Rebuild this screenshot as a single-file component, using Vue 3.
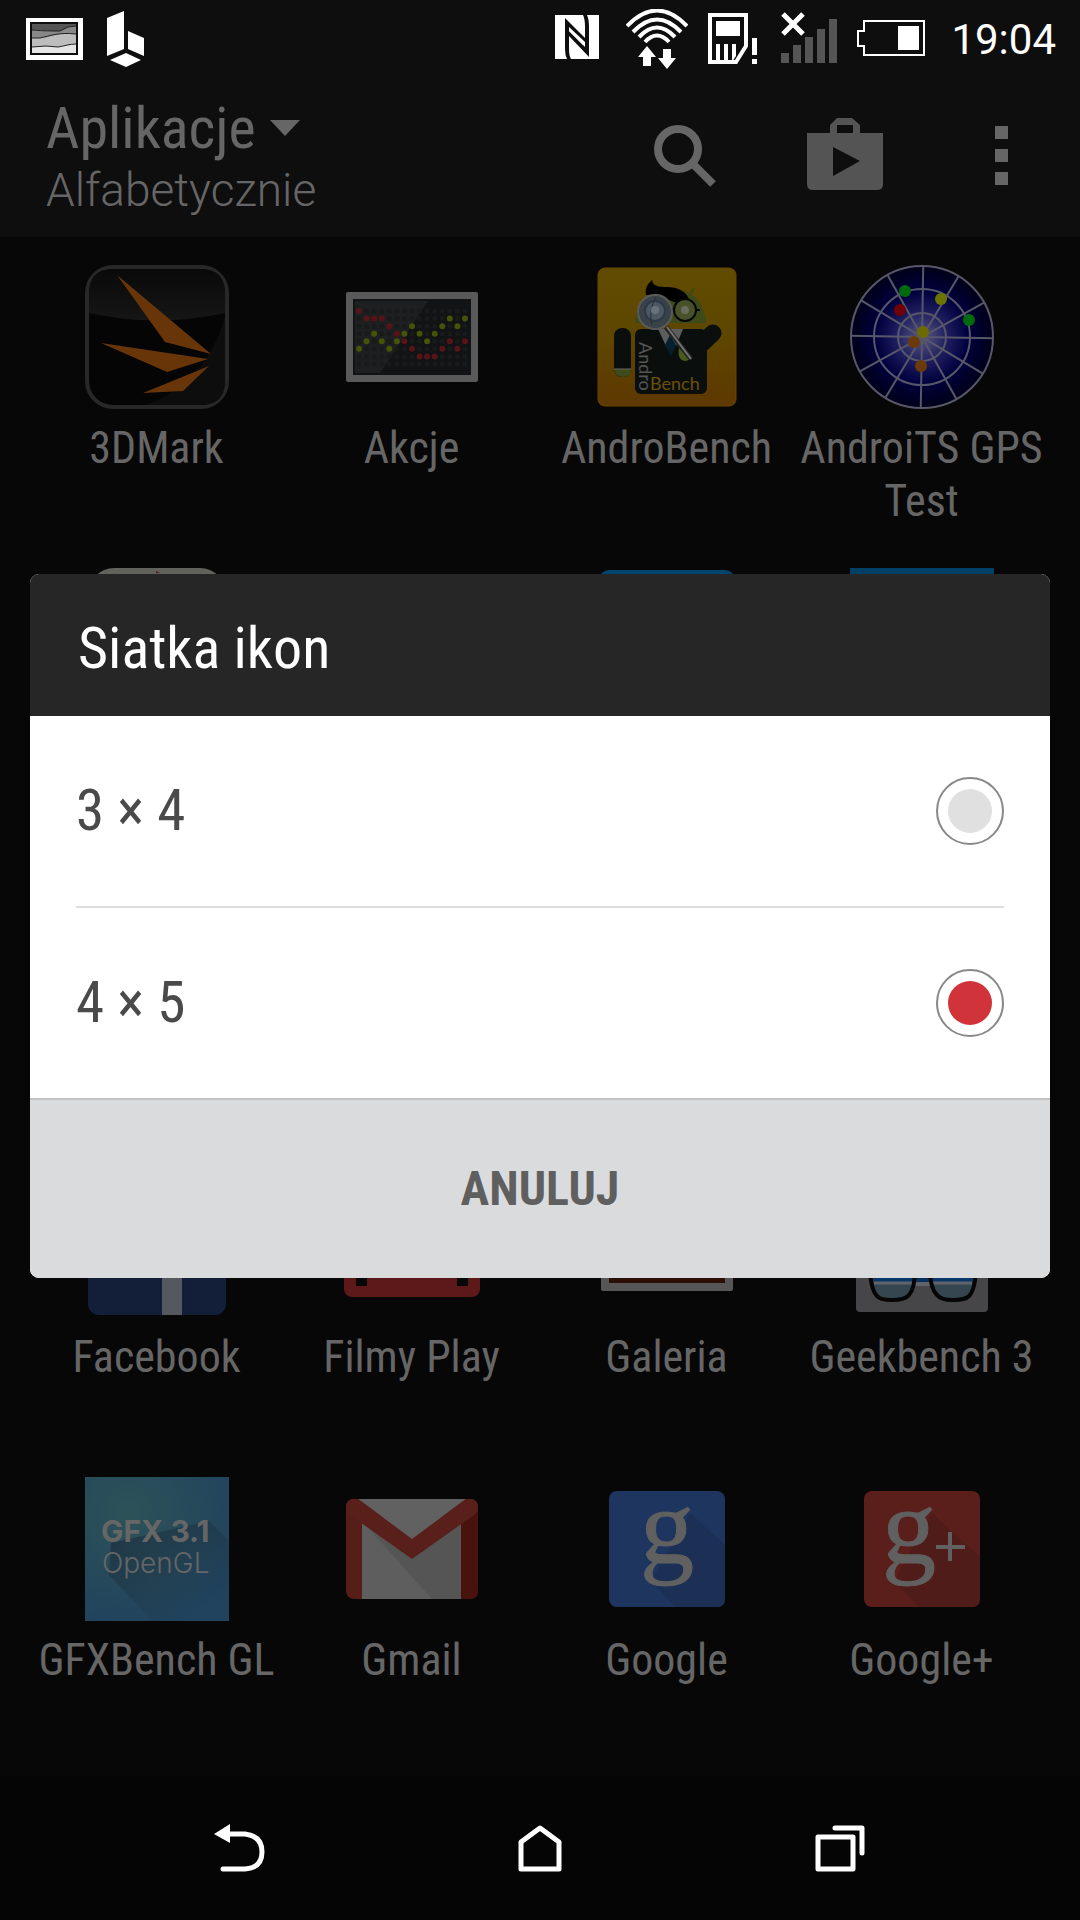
<template>
  <div class="screen">
    <header class="status-bar">
      <svg class="status-icon" width="61" height="42" viewBox="0 0 61 42">
        <rect width="57" height="42" fill="#fff" />
        <rect x="4" y="4" width="48" height="33" fill="#0e0e0e" />
        <rect x="6" y="6" width="44" height="29" fill="#bdbdbd" />
        <path d="M6 6h44v3l-9 1-6 3-12 0-17-1z" fill="#555" />
        <path d="M6 12c12 1 20 1 28 1l8-4 8-1v8c-9-2-17 0-25 2-7 2-11 2-19 2z" fill="#888" />
        <path d="M6 29l14-1 12 1c7-1 11-3 18-3v9H6z" fill="#e6e6e6" />
        <path
          d="M6 12c12 1 20 1 28 1l8-4 8-1M6 20h8c10-2 18-6 36-4M6 29l14-1 12 1c7-1 11-3 18-3"
          fill="none"
          stroke="#222"
        />
      </svg>
      <svg class="status-icon" width="37" height="56" viewBox="0 0 37 56">
        <path d="M0 7L17 0v38L0 45zM21 20l16 7v18l-16-7zM19 42l15 7-15 7-16-7z" fill="#fff" />
      </svg>
      <span class="spacer"></span>
      <svg class="status-icon" width="51" height="48" viewBox="0 0 51 48">
        <rect width="44" height="44" fill="#fff" />
        <path
          d="M12 44q-2-4-2-10V3l20 20V12q0-8-2-12h4q2 4 2 12v30L14 21v12q0 8 2 11zM14 12v4l16 16v-5z"
          fill="#0e0e0e"
        />
        <path d="M14 13v3l14 14v-4z" fill="#fff" />
      </svg>
      <svg class="status-icon" width="62" height="60" viewBox="0 0 62 60">
        <g fill="none" stroke="#fff" stroke-width="4">
          <path d="M1 17q30-31 60 0M7 23q24-25 48 0M13 28q18-19 36 0M19 33q12-13 24 0" />
        </g>
        <path
          d="M21 37l9 11h-5v9h-8v-9h-5zM41 60l9-11h-5v-9h-8v9h-5z"
          fill="#fff"
        />
      </svg>
      <svg class="status-icon" width="53" height="52" viewBox="0 0 53 52">
        <path d="M2 2h36v31L28 49H2z" fill="none" stroke="#fff" stroke-width="4" />
        <path
          d="M8 8h24v15H8zM8 31h4v18H8zM16 31h4v18h-4zM24 31h4v12l-4 6zM44 25h5v17h-5zM44 46h5v5h-5z"
          fill="#fff"
        />
      </svg>
      <svg class="status-icon" width="56" height="54" viewBox="0 0 56 54">
        <path
          d="M0 41h8v10H0zM12 33h8v18h-8zM24 25h8v26h-8zM36 17h8v34h-8zM48 7h8v44h-8z"
          fill="#555"
        />
        <path d="M2 2l20 20M22 2L2 22" stroke="#fff" stroke-width="5" />
      </svg>
      <svg class="status-icon" width="74" height="38" viewBox="0 0 74 38">
        <path d="M7 1h60v34H7V26H1V11h6z" fill="none" stroke="#fff" stroke-width="2" />
        <rect x="41" y="6" width="21" height="24" fill="#fff" />
      </svg>
      <time class="clock">19:04</time>
    </header>

    <div class="app-bar">
      <div class="app-bar-text">
        <button type="button" class="view-picker">
          Aplikacje
          <svg width="30" height="16" viewBox="0 0 30 16"><path d="M0 0h30L15 16z" fill="#666" /></svg>
        </button>
        <p class="sort-order">Alfabetycznie</p>
      </div>
      <button type="button" class="action" aria-label="Szukaj">
        <svg width="68" height="62" viewBox="0 0 68 62">
          <circle cx="24" cy="24" r="20" fill="none" stroke="#666" stroke-width="8" />
          <path d="M39 39l20 20" stroke="#666" stroke-width="8" />
        </svg>
      </button>
      <button type="button" class="action" aria-label="Sklep Play">
        <svg width="76" height="77" viewBox="0 0 76 77">
          <path
            fill-rule="evenodd"
            d="M0 15h23V7l7-7h15l8 7v8h23v51q0 6-6 6H6q-6 0-6-6zM30 7v8h16V7zM26 29v29l27-15z"
            fill="#545454"
          />
        </svg>
      </button>
      <button type="button" class="action" aria-label="Menu">
        <svg width="13" height="60" viewBox="0 0 13 60">
          <path d="M0 0h13v13H0zM0 23h13v13H0zM0 46h13v13H0z" fill="#666" />
        </svg>
      </button>
    </div>

    <main class="app-grid">
      <button v-for="(app, index) in apps" :key="index" type="button" class="app">
        <svg v-if="app.icon === '3dmark'" class="app-icon" viewBox="0 0 144 144">
          <rect x="2" y="2" width="140" height="140" rx="26" fill="#050505" stroke="#282828" stroke-width="4" />
          <path d="M4 48V28Q4 4 28 4h88q24 0 24 24v20q-68 15-136 0z" fill="url(#gloss)" />
          <path d="M140 52v64q0 24-24 24H60q60-20 80-88z" fill="#0d0d0d" />
          <path d="M32 10l94 79-46-12zM16 78l107 16-41 13zM124 101l-26 25-40 2z" fill="#683509" />
        </svg>

        <svg v-else-if="app.icon === 'stocks'" class="app-icon" viewBox="0 0 144 144">
          <rect x="6" y="27" width="132" height="90" rx="2" fill="#595959" />
          <rect x="13" y="34" width="118" height="76" fill="#111315" />
          <path d="M15 36h73l-48 72H15z" fill="#1d1f20" />
          <g v-for="row in 8" :key="row">
            <circle
              v-for="col in 15"
              :key="col"
              :cx="19 + (col - 1) * 7.57"
              :cy="46 + (row - 1) * 7.57"
              r="2.5"
              fill="#171b1a"
            />
          </g>
          <circle
            v-for="(level, col) in redLine"
            :key="'r' + col"
            :cx="19 + col * 7.57"
            :cy="46 + level * 7.57"
            r="3"
            fill="#571417"
          />
          <circle
            v-for="(level, col) in greenLine"
            :key="'g' + col"
            :cx="19 + col * 7.57"
            :cy="46 + level * 7.57"
            r="3"
            fill="#465207"
          />
        </svg>

        <svg v-else-if="app.icon === 'androbench'" class="app-icon" viewBox="0 0 144 144">
          <rect x="3" y="3" width="138" height="138" rx="7" fill="url(#amber)" stroke="#6b4700" />
          <path d="M40 58q2-34 35-34t36 34z" fill="#3d4a19" />
          <path d="M94 32l5-9" stroke="#3d4a19" stroke-width="2" />
          <path d="M57 15q-8 7-6 15l6 0q10-3 17 5l8 3q8-5 12-4-6-13-25-12-12 0-12-7z" fill="#000" />
          <rect x="19" y="63" width="17" height="49" rx="8" fill="#0a0f0e" />
          <path d="M19 104h17q0 8-8 8t-9-8z" fill="#3d4a19" />
          <path d="M19 104h17" stroke="#666" />
          <rect x="40" y="64" width="72" height="65" rx="6" fill="#0a0f0e" />
          <path d="M97 88l21-20" stroke="#0a0f0e" stroke-width="17" stroke-linecap="round" />
          <path d="M63 64h25l-7 17-6-10-4 10z" fill="#5d5d5d" />
          <path d="M75 70l6 10-5 11-6-11z" fill="#07202f" />
          <path d="M84 83q-2 13 7 13l5-2z" fill="#4a5a1b" />
          <circle cx="90" cy="45" r="11" fill="#49512a" stroke="#070707" stroke-width="2" />
          <circle cx="90" cy="45" r="4" fill="#6a6c5c" />
          <path d="M76 44h4M101 45h4" stroke="#070707" stroke-width="2" />
          <circle cx="60" cy="47" r="17" fill="#394249" stroke="#5a5a58" stroke-width="2" />
          <circle cx="60" cy="46" r="10" fill="#4c5863" stroke="#2e3948" stroke-width="2" />
          <path d="M61 32q-8 15-4 28" fill="none" stroke="#28302d" />
          <circle cx="60" cy="45" r="4" fill="#68727c" />
          <path d="M71 62l25 32" stroke="#242424" stroke-width="5" />
          <path d="M72 62l24 32" stroke="#747474" stroke-width="2" />
          <text class="badge-text" x="0" y="0" fill="#555" transform="translate(44 77) rotate(90)">Andro</text>
          <text class="badge-text" x="55" y="125" fill="#6d4f08">Bench</text>
        </svg>

        <svg v-else-if="app.icon === 'gps'" class="app-icon" viewBox="0 0 144 144">
          <circle cx="72" cy="72" r="71" fill="url(#radar)" />
          <g fill="none" stroke="#57576a" stroke-width="2">
            <path
              v-for="n in 6"
              :key="n"
              d="M72 1v142"
              :transform="`rotate(${n * 30 + 1} 72 72)`"
            />
            <circle cx="72" cy="72" r="24" />
            <circle cx="72" cy="72" r="48" />
            <circle cx="72" cy="72" r="71" />
          </g>
          <circle
            v-for="(dot, n) in satellites"
            :key="'s' + n"
            :cx="dot.x"
            :cy="dot.y"
            r="6"
            :fill="dot.color"
          />
        </svg>

        <svg v-else-if="app.icon === 'dial'" class="app-icon" viewBox="0 0 144 144">
          <rect x="3" width="138" height="144" rx="26" fill="#62625d" />
          <path d="M71 3l4 2h-4z" fill="#5a1414" />
        </svg>
        <svg v-else-if="app.icon === 'tile'" class="app-icon" viewBox="0 0 144 144">
          <rect x="4" y="2" width="136" height="138" rx="10" fill="#00466c" />
        </svg>
        <svg v-else-if="app.icon === 'square'" class="app-icon" viewBox="0 0 144 144">
          <rect width="144" height="144" fill="#003f66" />
        </svg>

        <svg v-else-if="app.icon === 'facebook'" class="app-icon" viewBox="0 0 144 144">
          <rect x="3" y="3" width="138" height="138" rx="11" fill="#131e38" />
          <rect x="77" y="60" width="20" height="81" fill="#55585f" />
        </svg>

        <svg v-else-if="app.icon === 'movies'" class="app-icon" viewBox="0 0 144 144">
          <rect x="4" y="20" width="136" height="103" rx="8" fill="#5d1819" />
          <path d="M16 96h11v16H16zM117 96h11v16h-11z" fill="#070707" />
        </svg>

        <svg v-else-if="app.icon === 'gallery'" class="app-icon" viewBox="0 0 144 144">
          <rect x="6" y="26" width="132" height="91" rx="2" fill="#565656" />
          <rect x="14" y="34" width="116" height="75" fill="#2c0e04" />
        </svg>

        <svg v-else-if="app.icon === 'geekbench'" class="app-icon" viewBox="0 0 144 144">
          <rect x="6" y="6" width="132" height="132" rx="4" fill="#464548" />
          <path d="M22 80h100v28H22z" fill="#08305f" />
          <path d="M22 108h100v4H22z" fill="#60646a" />
          <path
            d="M20 96q1 20 7 26 3 4 15 4 13 0 17-5 6-7 6-25zM80 96q0 18 7 25 4 5 16 5t16-4q6-6 7-26z"
            fill="#354650"
          />
          <path d="M22 96q0 7 2 12h40l1-12zM80 96l1 12h42l2-12z" fill="#08386b" />
          <path d="M24 109h38M82 109h40" stroke="#60646a" stroke-width="3" />
          <path
            d="M20 96q1 20 7 26 3 4 15 4 13 0 17-5 6-7 6-25zM80 96q0 18 7 25 4 5 16 5t16-4q6-6 7-26z"
            fill="none"
            stroke="#050505"
            stroke-width="4"
          />
        </svg>

        <svg v-else-if="app.icon === 'gfxbench'" class="app-icon" viewBox="0 0 144 144">
          <rect width="144" height="144" fill="url(#teal)" />
          <path d="M24 98l44 46h76V64l-20-20-98 22z" fill="url(#longShadow)" />
          <text class="gfx-bold" x="16" y="65">GFX 3.1</text>
          <text class="gfx-light" x="17" y="96">OpenGL</text>
        </svg>

        <svg v-else-if="app.icon === 'gmail'" class="app-icon" viewBox="0 0 144 144">
          <rect x="6" y="22" width="132" height="100" rx="8" fill="#571d19" />
          <path d="M22 40h99v82H22z" fill="#5e5e5e" />
          <path d="M24 46l68 76h29V47z" fill="#555" />
          <path d="M18 22h108L72 62z" fill="#616161" />
          <path d="M121 47l17-13v80q0 8-8 8h-9z" fill="#48130c" />
          <path d="M6 30q0-8 8-8h4l54 40 54-40h4q8 0 8 8 0 5-4 8L72 82 10 38q-4-3-4-8z" fill="#591f1b" />
        </svg>

        <svg v-else-if="app.icon === 'google'" class="app-icon" viewBox="0 0 144 144">
          <rect x="14" y="14" width="116" height="116" rx="8" fill="#1d355f" />
          <path d="M95 36l35 32v54q0 8-8 8H80L56 104z" fill="#1b3054" />
          <text class="serif-g" x="45" y="86">g</text>
        </svg>

        <svg v-else-if="app.icon === 'gplus'" class="app-icon" viewBox="0 0 144 144">
          <rect x="14" y="14" width="116" height="116" rx="8" fill="#5a1f1b" />
          <path d="M82 36l48 44v42q0 8-8 8H68L44 104z" fill="#501c19" />
          <text class="serif-g" x="32" y="86">g</text>
          <path d="M86 70h29M100 55v29" stroke="#606060" stroke-width="4" />
        </svg>

        <span v-else class="app-icon"></span>
        <span class="app-label">{{ app.label }}</span>
      </button>
    </main>

    <nav class="nav-bar">
      <button type="button" class="nav-button" aria-label="Wstecz">
        <svg width="52" height="48" viewBox="0 0 52 48">
          <path d="M0 10L16 0v19z" fill="#fff" />
          <path d="M14 10h17q17 2 17 18T31 45H9" fill="none" stroke="#fff" stroke-width="5" stroke-linecap="round" />
        </svg>
      </button>
      <button type="button" class="nav-button" aria-label="Ekran główny">
        <svg width="44" height="48" viewBox="0 0 44 48">
          <path d="M3 18L22 4l19 14v27H3z" fill="none" stroke="#fff" stroke-width="5" stroke-linejoin="round" />
        </svg>
      </button>
      <button type="button" class="nav-button" aria-label="Ostatnie aplikacje">
        <svg width="50" height="48" viewBox="0 0 50 48">
          <g fill="none" stroke="#fff" stroke-width="5" stroke-linejoin="round" stroke-linecap="round">
            <path d="M3 13h35v32H3zM20 4h27v25" />
          </g>
        </svg>
      </button>
    </nav>

    <div class="dialog-layer">
      <form class="dialog" role="dialog" aria-labelledby="dialog-title" @submit.prevent>
        <h2 id="dialog-title" class="dialog-title">Siatka ikon</h2>
        <div class="options">
          <label v-for="size in gridSizes" :key="size" class="option">
            <span>{{ size }}</span>
            <input v-model="selected" type="radio" name="grid" class="radio" :value="size" />
          </label>
        </div>
        <button type="button" class="cancel">ANULUJ</button>
      </form>
    </div>

    <svg class="defs" width="0" height="0" aria-hidden="true">
      <defs>
        <linearGradient id="gloss" x1="0" y1="0" x2="0" y2="1">
          <stop offset="0" stop-color="#090909" />
          <stop offset="1" stop-color="#161616" />
        </linearGradient>
        <linearGradient id="amber" x1="0" y1="0" x2="0" y2="1">
          <stop offset="0" stop-color="#604c00" />
          <stop offset="0.5" stop-color="#5e4600" />
          <stop offset="1" stop-color="#5e3800" />
        </linearGradient>
        <radialGradient id="radar">
          <stop offset="0" stop-color="#5a5a80" />
          <stop offset="0.35" stop-color="#1f1f60" />
          <stop offset="0.65" stop-color="#00003e" />
          <stop offset="1" stop-color="#000018" />
        </radialGradient>
        <radialGradient id="teal" cx="0.3" cy="0.25" r="0.8">
          <stop offset="0" stop-color="#2d5257" />
          <stop offset="1" stop-color="#21435e" />
        </radialGradient>
        <linearGradient id="longShadow" x1="0.2" y1="0.1" x2="0.8" y2="0.9">
          <stop offset="0" stop-color="#1b3040" stop-opacity="0.7" />
          <stop offset="1" stop-color="#1b3040" stop-opacity="0" />
        </linearGradient>
      </defs>
    </svg>
  </div>
</template>

<script setup>
import { ref } from 'vue'

const gridSizes = ['3 × 4', '4 × 5']
const selected = ref('4 × 5')

const apps = [
  { icon: '3dmark', label: '3DMark' },
  { icon: 'stocks', label: 'Akcje' },
  { icon: 'androbench', label: 'AndroBench' },
  { icon: 'gps', label: 'AndroiTS GPS Test' },
  { icon: 'dial' },
  {},
  { icon: 'tile' },
  { icon: 'square' },
  {},
  {},
  {},
  {},
  { icon: 'facebook', label: 'Facebook' },
  { icon: 'movies', label: 'Filmy Play' },
  { icon: 'gallery', label: 'Galeria' },
  { icon: 'geekbench', label: 'Geekbench 3' },
  { icon: 'gfxbench', label: 'GFXBench GL' },
  { icon: 'gmail', label: 'Gmail' },
  { icon: 'google', label: 'Google' },
  { icon: 'gplus', label: 'Google+' },
]

// rows of the lit dots on the stocks icon, one per column
const redLine = [0, 1, 1, 1, 2, 3, 4, 5, 6, 6, 6, 5, 4, 5, 4]
const greenLine = [5, 4, 3, 4, 5, 4, 3, 2, 3, 4, 3, 2, 1, 2, 1]

const satellites = [
  { x: 55, y: 26, color: '#006b0c' },
  { x: 119, y: 55, color: '#006b0c' },
  { x: 91, y: 34, color: '#6b7400' },
  { x: 50, y: 45, color: '#6d0008' },
  { x: 73, y: 67, color: '#6e6a00' },
  { x: 64, y: 77, color: '#6b3a08' },
  { x: 71, y: 101, color: '#6b3a08' },
]
</script>

<style>
body {
  background: #070707;
}
</style>

<style scoped>
.screen {
  position: relative;
  display: flex;
  flex-direction: column;
  min-height: 100vh;
  background: #070707;
  color: #666;
  font-family: 'Roboto Condensed', 'Liberation Sans Narrow', Roboto, sans-serif;
}
button {
  border: 0;
  padding: 0;
  background: none;
  color: inherit;
  font: inherit;
}
.status-bar {
  box-sizing: border-box;
  display: flex;
  align-items: center;
  gap: 20px;
  height: 75px;
  padding: 3px 24px 0 26px;
  background: #0e0e0e;
}
.status-icon {
  flex: none;
}
.spacer {
  flex: 1;
}
.clock {
  color: #fff;
  font-family: Roboto, sans-serif;
  font-size: 42px;
}
.app-bar {
  display: flex;
  align-items: center;
  height: 162px;
  padding-left: 46px;
  background: #0e0e0e;
}
.app-bar-text {
  flex: 1;
  padding-top: 4px;
}
.view-picker {
  display: flex;
  align-items: center;
  gap: 14px;
  font-size: 58px;
  line-height: 64px;
}
.sort-order {
  margin: 0;
  font-family: Roboto, sans-serif;
  font-size: 46px;
  font-weight: 300;
  line-height: 60px;
}
.action {
  display: flex;
  justify-content: center;
  width: 157px;
}
.app-grid {
  flex: 1;
  display: grid;
  grid-template-columns: repeat(4, 1fr);
  grid-auto-rows: minmax(263px, auto);
  align-content: start;
  row-gap: 40px;
  padding: 28px 31px 0 29px;
}
.app {
  display: flex;
  flex-direction: column;
  align-items: center;
  gap: 13px;
}
.app-icon {
  flex: none;
  width: 144px;
  height: 144px;
  overflow: visible;
}
.app-label {
  font-size: 44px;
  line-height: 53px;
  text-align: center;
}
.badge-text {
  font-family: Lato, sans-serif;
  font-size: 18px;
}
.gfx-bold {
  fill: #666;
  font-family: Inter, sans-serif;
  font-size: 30px;
  font-weight: 700;
}
.gfx-light {
  fill: #666;
  font-family: Inter, sans-serif;
  font-size: 28px;
  font-weight: 300;
}
.serif-g {
  fill: #606060;
  stroke: #606060;
  stroke-width: 1px;
  font-family: 'Liberation Serif', serif;
  font-size: 108px;
}
.nav-bar {
  display: flex;
  align-items: center;
  height: 144px;
  padding: 0 90px;
  background: #050505;
}
.nav-button {
  flex: 1;
  display: flex;
  justify-content: center;
}
.dialog-layer {
  position: absolute;
  inset: 75px 0 144px;
  display: flex;
  align-items: center;
  padding: 0 30px;
}
.dialog {
  flex: 1;
  overflow: hidden;
  border-radius: 9px;
  background: #fff;
}
.dialog-title {
  margin: 0;
  padding: 40px 48px 34px;
  background: #262626;
  color: #fff;
  font-size: 58px;
  font-weight: 400;
  line-height: 68px;
}
.options {
  padding: 0 46px;
}
.option {
  display: flex;
  align-items: center;
  justify-content: space-between;
  height: 190px;
  color: #4a4a4a;
  font-size: 57px;
}
.option + .option {
  border-top: 2px solid #dedede;
}
.radio {
  appearance: none;
  box-sizing: border-box;
  width: 68px;
  height: 68px;
  margin: 0;
  padding: 10px;
  border: 2px solid #888;
  border-radius: 50%;
  background: #e0e0e0 content-box;
}
.radio:checked {
  background-color: #d0333a;
}
.cancel {
  display: block;
  width: 100%;
  height: 180px;
  border-top: 2px solid #c2c2c2;
  background: #dadbdd;
  color: #5f5f5f;
  font-size: 48px;
  font-weight: 700;
}
.defs {
  position: absolute;
}
</style>
